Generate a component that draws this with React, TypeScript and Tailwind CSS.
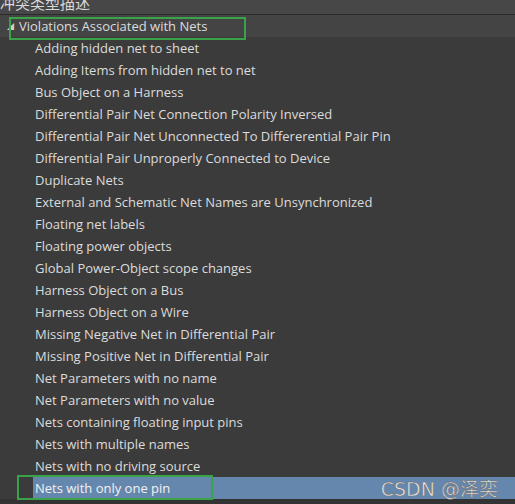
import React from "react";

const items = [
  "Adding hidden net to sheet",
  "Adding Items from hidden net to net",
  "Bus Object on a Harness",
  "Differential Pair Net Connection Polarity Inversed",
  "Differential Pair Net Unconnected To Differerential Pair Pin",
  "Differential Pair Unproperly Connected to Device",
  "Duplicate Nets",
  "External and Schematic Net Names are Unsynchronized",
  "Floating net labels",
  "Floating power objects",
  "Global Power-Object scope changes",
  "Harness Object on a Bus",
  "Harness Object on a Wire",
  "Missing Negative Net in Differential Pair",
  "Missing Positive Net in Differential Pair",
  "Net Parameters with no name",
  "Net Parameters with no value",
  "Nets containing floating input pins",
  "Nets with multiple names",
  "Nets with no driving source",
];

export default function App() {
  return (
    <div
      className="relative flex flex-col w-[515px] h-[504px] overflow-hidden bg-[#3b3b3b] text-[#dcdcdc]"
      style={{ fontFamily: '"Open Sans", "Noto Sans", "Noto Sans CJK SC", sans-serif' }}
    >
      <div className="h-[15px] shrink-0 bg-[#474747] border-b border-[#2a2a2a] flex items-end overflow-hidden">
        <div
          className="text-[15px] leading-[15px] translate-y-[-4px] text-[#d8d8d8]"
          style={{ fontFamily: '"Noto Sans CJK SC", sans-serif' }}
        >
          冲突类型描述
        </div>
      </div>
      <div className="relative h-[22px] shrink-0 bg-[#444444] flex items-center pt-[2px] text-[13px]">
        <span className="w-[19px] pl-[7px] text-[7px] text-[#cfcfcf]">◢</span>
        <span>Violations Associated with Nets</span>
        <div className="absolute left-[9px] top-[2px] w-[237px] h-[23px] border-2 border-[#3aa34a]" />
      </div>
      <div className="flex flex-col">
        {items.map((t) => (
          <div key={t} className="h-[22px] flex items-center pt-[2px] pl-[35px] text-[13px] whitespace-nowrap">
            {t}
          </div>
        ))}
        <div className="relative h-[22px] ml-[33px] bg-[#6587ad] flex items-center justify-between pt-[2px] pl-[2px] pr-[17px] text-[13px] text-[#f2f2f2]">
          <span>Nets with only one pin</span>
          <span
            className="text-[19px] leading-[20px] text-[#e4e4e4]"
            style={{ fontFamily: '"DejaVu Sans", "Noto Sans CJK SC", sans-serif', WebkitTextStroke: "0.5px #6a6a6a" }}
          >
            CSDN @泽奕
          </span>
          <div className="absolute left-[-16px] top-[-2px] w-[196px] h-[25px] border-2 border-[#3aa34a]" />
        </div>
      </div>
      <div className="flex-1 bg-[#333333]" />
    </div>
  );
}
